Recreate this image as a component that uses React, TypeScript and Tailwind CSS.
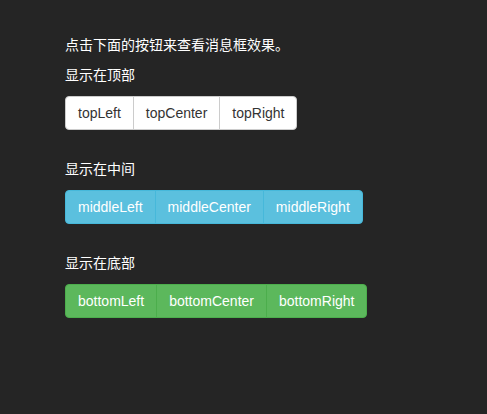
import React from "react";

type Variant = "default" | "info" | "success";

const VARIANTS: Record<Variant, string> = {
  default: "bg-white text-[#333] border-[#ccc]",
  info: "bg-[#5bc0de] text-white border-[#46b8da]",
  success: "bg-[#5cb85c] text-white border-[#4cae4c]",
};

function BtnGroup({ items, variant }: { items: string[]; variant: Variant }) {
  return (
    <div className="inline-flex">
      {items.map((label, i) => (
        <button
          key={label}
          type="button"
          className={`px-3 py-[6px] text-[14px] leading-5 border ${VARIANTS[variant]} ${
            i > 0 ? "-ml-px" : ""
          } ${i === 0 ? "rounded-l" : ""} ${i === items.length - 1 ? "rounded-r" : ""}`}
        >
          {label}
        </button>
      ))}
    </div>
  );
}

export default function App() {
  return (
    <div
      className="min-h-screen bg-[#252525] text-white pl-[65px] pt-[35px] text-[14px] leading-5"
      style={{ fontFamily: '"Liberation Sans", "Noto Sans CJK SC", sans-serif' }}
    >
      <p className="mb-[10px]">点击下面的按钮来查看消息框效果。</p>

      {/* top */}
      <p className="mb-[11px]">显示在顶部</p>
      <BtnGroup items={["topLeft", "topCenter", "topRight"]} variant="default" />

      {/* middle */}
      <p className="mt-[29px] mb-[11px]">显示在中间</p>
      <BtnGroup items={["middleLeft", "middleCenter", "middleRight"]} variant="info" />

      {/* bottom */}
      <p className="mt-[29px] mb-[11px]">显示在底部</p>
      <BtnGroup items={["bottomLeft", "bottomCenter", "bottomRight"]} variant="success" />
    </div>
  );
}
